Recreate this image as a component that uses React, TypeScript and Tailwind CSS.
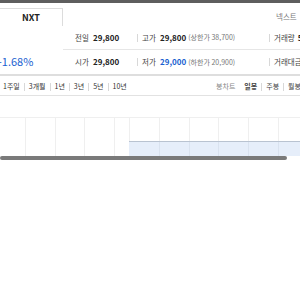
import React from "react";

interface Cell {
  label: string;
  value: string;
  valueClass?: string;
  note?: string;
}

let rows: Cell[][] = [
  [
    { label: "전일", value: "29,800" },
    { label: "고가", value: "29,800", note: "(상한가 38,700)" },
    { label: "거래량", value: "5" }
  ],
  [
    { label: "시가", value: "29,800" },
    { label: "저가", value: "29,000", valueClass: "text-[#1a5fd0]", note: "(하한가 20,900)" },
    { label: "거래대금", value: "" }
  ]
];

let periods = ["1주일", "3개월", "1년", "3년", "5년", "10년"];
let gridX = [25, 55, 84, 114, 129, 159, 189, 218, 248, 278];

let Sep = () => <span className="inline-block shrink-0 w-px h-[8px] bg-[#d8d8d8] mx-[4px]" />;

let App = () => {
  return (
    <div className="w-[300px] h-[300px] overflow-hidden bg-white text-[#222] font-['Noto_Sans_CJK_KR',sans-serif]">
      <div className="h-[3px] bg-[#5e5e5e]" />
      <div className="flex items-end justify-between h-[23px]">
        <div className="ml-[-1px] w-[64px] h-[18px] border border-b-0 border-[#dcdcdc] flex items-center justify-center text-[9px] font-bold">
          NXT
        </div>
        <div className="w-[24px] h-[23px] flex items-center whitespace-nowrap text-[7.5px] text-[#777] overflow-hidden pt-[4px]">
          넥스트
        </div>
      </div>
      <div className="flex border-b-2 border-[#dedede]">
        <div className="w-[63px] shrink-0 flex items-end pb-[5px] overflow-hidden">
          <span className="ml-[-2px] text-[11px] text-[#1a5fd0] whitespace-nowrap">-1.68%</span>
        </div>
        <div className="flex-1 min-w-0">
          {rows.map((row, i) => (
            <div
              key={i}
              className={
                "h-[24px] flex items-center whitespace-nowrap " +
                (i == 0 ? "border-b border-[#e6e6e6]" : "")
              }
            >
              <div className="w-[70px] shrink-0 pl-[12px] flex items-center">
                <span className="text-[#444] text-[7.5px] w-[18px]">{row[0].label}</span>
                <span className="font-bold text-[8px]">{row[0].value}</span>
              </div>
              <div className="w-[132px] shrink-0 flex items-center">
                <Sep />
                <span className="text-[#444] text-[7.5px] w-[18px]">{row[1].label}</span>
                <span className={"font-bold text-[8px] " + (row[1].valueClass ?? "")}>{row[1].value}</span>
                <span className="ml-[2px] text-[#777] text-[7px]">{row[1].note}</span>
              </div>
              <div className="flex items-center">
                <Sep />
                <span className="text-[#444] text-[7.5px] mr-[3px]">{row[2].label}</span>
                <span className="font-bold text-[8px]">{row[2].value}</span>
              </div>
            </div>
          ))}
        </div>
      </div>
      <div className="h-[20px] flex items-center justify-between border-b border-[#e2e2e2] text-[7px] whitespace-nowrap pt-[2px]">
        <div className="flex items-center pl-[3px]">
          {periods.map((p, i) => (
            <React.Fragment key={p}>
              {i > 0 && <Sep />}
              <span className="text-[#333]">{p}</span>
            </React.Fragment>
          ))}
        </div>
        <div className="flex items-center mr-[-1px]">
          <span className="text-[#888] mr-[9px]">봉차트</span>
          <span className="font-bold text-[#444]">일봉</span>
          <Sep />
          <span className="text-[#444]">주봉</span>
          <Sep />
          <span className="text-[#444]">월봉</span>
        </div>
      </div>
      <div className="mt-[21px]">
        <svg width="300" height="39" viewBox="0 0 300 39">
          <line x1="0" y1="0.5" x2="300" y2="0.5" stroke="#efefef" />
          {gridX.map((x) => (
            <line key={x} x1={x + 0.5} y1="0" x2={x + 0.5} y2="39" stroke="#efefef" />
          ))}
          <rect x="129" y="24" width="171" height="15" fill="#e6eefa" />
          <line x1="129" y1="24.5" x2="300" y2="24.5" stroke="#b9c3d1" />
          {gridX
            .filter((x) => x > 129)
            .map((x) => (
              <line key={"b" + x} x1={x + 0.5} y1="25" x2={x + 0.5} y2="39" stroke="#d9e2ef" />
            ))}
        </svg>
        <div className="h-[4px] w-[287px] rounded-full bg-[#7a7a7a]" />
      </div>
    </div>
  );
};

export default App;
